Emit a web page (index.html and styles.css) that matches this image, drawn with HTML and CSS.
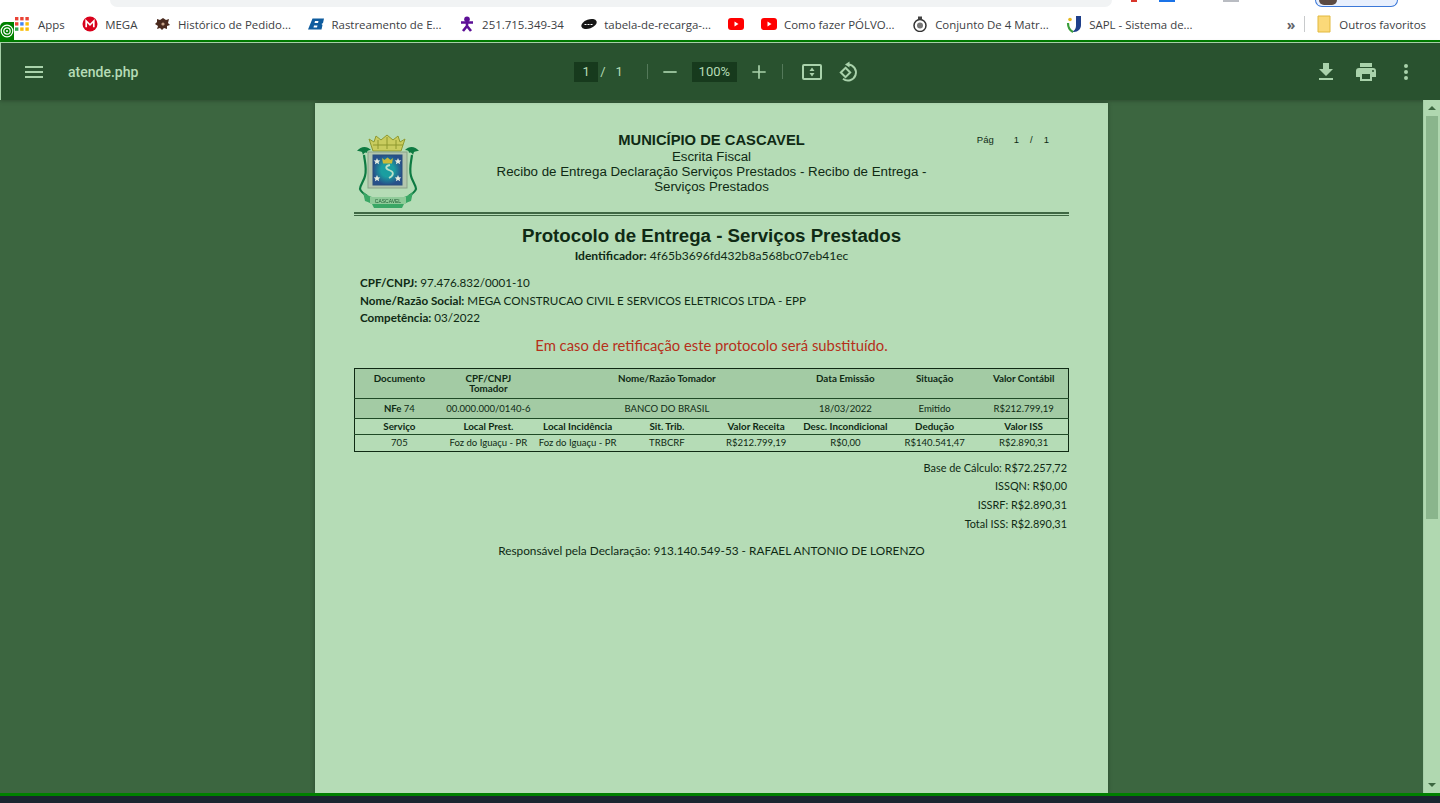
FILE: index.html
```html
<!DOCTYPE html>
<html lang="pt-BR">
<head>
    <meta charset="UTF-8">
    <meta name="viewport" content="width=device-width, initial-scale=1.0">
    <title>atende.php</title>
    <link rel="stylesheet" href="styles.css">
</head>
<body>
    <div class="topstrip">
        <div class="omnibox"></div>
        <span class="ext ext-red"></span>
        <span class="ext ext-blue"></span>
        <span class="ext ext-gray"></span>
        <div class="profile-pill"><span class="avatar"></span></div>
    </div>

    <div class="bookmarks">
        <div class="bm-list">
            <a class="bm bm-apps">
                <svg width="16" height="16" viewBox="0 0 16 16"><g>
                    <rect x="1" y="1" width="3.4" height="3.4" fill="#ea4335"/><rect x="6.2" y="1" width="3.4" height="3.4" fill="#ea4335"/><rect x="11.4" y="1" width="3.4" height="3.4" fill="#ea4335"/>
                    <rect x="1" y="6.2" width="3.4" height="3.4" fill="#ea4335"/><rect x="6.2" y="6.2" width="3.4" height="3.4" fill="#4285f4"/><rect x="11.4" y="6.2" width="3.4" height="3.4" fill="#fbbc05"/>
                    <rect x="1" y="11.4" width="3.4" height="3.4" fill="#34a853"/><rect x="6.2" y="11.4" width="3.4" height="3.4" fill="#fbbc05"/><rect x="11.4" y="11.4" width="3.4" height="3.4" fill="#fbbc05"/>
                </g></svg>
                <span>Apps</span>
            </a>
            <a class="bm">
                <svg width="16" height="16" viewBox="0 0 16 16"><circle cx="8" cy="8" r="7.5" fill="#d9001b"/><path d="M4.2 11.2V5l3.8 3.8L11.8 5v6.2" fill="none" stroke="#fff" stroke-width="1.7"/></svg>
                <span>MEGA</span>
            </a>
            <a class="bm">
                <svg width="16" height="16" viewBox="0 0 16 16"><path d="M2 3l3 1 3-2 3 2 3-1-1 4 2 2-3 1 0 3-3-1-2 2-2-2-3 1 1-3-3-2 2-2z" fill="#4a2a1e"/><circle cx="8" cy="8" r="1.6" fill="#c9a58a"/></svg>
                <span>Histórico de Pedido...</span>
            </a>
            <a class="bm">
                <svg width="16" height="16" viewBox="0 0 16 16"><path d="M4.500 2.500H16l-1 4.500-1.500 1 1 1-1 4.500H0zM7 5l-.5 2h3.500l.5-2zM6 9.500l-.5 2H9l.5-2z" fill="#0f5c9e" fill-rule="evenodd"/></svg>
                <span>Rastreamento de E...</span>
            </a>
            <a class="bm">
                <svg width="16" height="16" viewBox="0 0 16 16"><circle cx="8" cy="3.200" r="2.800" fill="#5c0f96"/><path d="M2 6.500h12M8 6v4M8 10l-4 5M8 10l4 5" fill="none" stroke="#5c0f96" stroke-width="2.600"/></svg>
                <span>251.715.349-34</span>
            </a>
            <a class="bm">
                <svg width="16" height="16" viewBox="0 0 16 16"><ellipse cx="8" cy="8" rx="8" ry="4.500" transform="rotate(-20 8 8)" fill="#161616"/><path d="M3.500 8.500h9" stroke="#fff" stroke-width="1.200" stroke-dasharray="2 1"/></svg>
                <span>tabela-de-recarga-...</span>
            </a>
            <a class="bm">
                <svg width="16" height="16" viewBox="0 0 16 16"><rect y="2" width="16" height="12" rx="3" fill="#f00"/><path d="M6.500 5.500l4 2.500-4 2.500z" fill="#fff"/></svg>
            </a>
            <a class="bm bm-polvo">
                <svg width="16" height="16" viewBox="0 0 16 16"><rect y="2" width="16" height="12" rx="3" fill="#f00"/><path d="M6.500 5.500l4 2.500-4 2.500z" fill="#fff"/></svg>
                <span>Como fazer PÓLVO...</span>
            </a>
            <a class="bm">
                <svg width="16" height="16" viewBox="0 0 16 16"><circle cx="8" cy="9.500" r="6" fill="#fff" stroke="#333" stroke-width="1.500"/><circle cx="8" cy="9.500" r="3" fill="#777"/><rect x="6" y="0.500" width="4" height="3" fill="#444"/></svg>
                <span>Conjunto De 4 Matr...</span>
            </a>
            <a class="bm">
                <svg width="16" height="18" viewBox="0 0 16 18"><path d="M10 1h5v9c0 4-3 7-7 7H6c2-1 4-3 4-6z" fill="#1e3f8a"/><path d="M2 8c0 4 1 7 5 9" fill="none" stroke="#3a9d3a" stroke-width="2.200"/><circle cx="4" cy="4.500" r="1.800" fill="#e6b820"/></svg>
                <span>SAPL - Sistema de...</span>
            </a>
        </div>
        <div class="bm-end">
            <span class="chevrons">»</span>
            <span class="bm-sep"></span>
            <a class="bm bm-other">
                <svg width="16" height="18" viewBox="0 0 16 18"><path d="M2 1h7l5 0v16H2z" fill="#fbd979" stroke="#e2b93f" stroke-width="1"/></svg>
                <span>Outros favoritos</span>
            </a>
        </div>
    </div>

    <div class="badge">
        <svg width="14" height="14" viewBox="0 0 14 14"><circle cx="7" cy="7" r="5.800" fill="none" stroke="#fff" stroke-width="1.200"/><circle cx="7" cy="7" r="3.200" fill="none" stroke="#fff" stroke-width="1.200"/><circle cx="7" cy="7" r="1" fill="#fff"/></svg>
    </div>

    <div class="viewer">
        <header class="toolbar">
            <div class="tb-left">
                <svg class="tb-icon" width="24" height="24" viewBox="0 0 24 24"><path d="M3 18h18v-2H3zm0-5h18v-2H3zm0-7v2h18V6z"/></svg>
                <span class="filename">atende.php</span>
            </div>
            <div class="tb-center">
                <span class="field field-page">1</span>
                <span class="pg-of">/</span>
                <span class="pg-total">1</span>
                <span class="tb-sep tb-sep-first"></span>
                <svg class="tb-icon" width="20" height="20" viewBox="0 0 24 24"><path d="M4 11h16v2H4z"/></svg>
                <span class="field field-zoom">100%</span>
                <svg class="tb-icon" width="20" height="20" viewBox="0 0 24 24"><path d="M20 13h-7v7h-2v-7H4v-2h7V4h2v7h7z"/></svg>
                <span class="tb-sep tb-sep-second"></span>
                <svg class="tb-icon" width="20" height="16" viewBox="0 0 20 16"><path d="M2 0h16a2 2 0 0 1 2 2v12a2 2 0 0 1-2 2H2a2 2 0 0 1-2-2V2a2 2 0 0 1 2-2zm0 2v12h16V2zM10 3.500 12.500 7h-5zM10 12.500 7.500 9h5z" fill-rule="evenodd"/></svg>
                <svg class="tb-line tb-rotate" width="24" height="24" viewBox="0 0 24 24"><path d="M9.500 7.800 14.200 12.500 9.500 17.200 4.800 12.500z"/><path d="M12 4.500a8 8 0 1 1-5 14.300"/><path class="tb-arrow" d="M13.500 1.500 9 4.500l4.500 3z"/></svg>
            </div>
            <div class="tb-right">
                <svg class="tb-icon" width="24" height="24" viewBox="0 0 24 24"><path d="M19 9h-4V3H9v6H5l7 7zM5 18v2h14v-2z"/></svg>
                <svg class="tb-icon" width="24" height="24" viewBox="0 0 24 24"><path d="M19 8H5a3 3 0 0 0-3 3v6h4v4h12v-4h4v-6a3 3 0 0 0-3-3zm-3 11H8v-5h8zm3-7a1 1 0 1 1 0-2 1 1 0 0 1 0 2zM18 3H6v4h12z"/></svg>
                <svg class="tb-icon" width="24" height="24" viewBox="0 0 24 24"><path d="M12 8a2 2 0 1 0 0-4 2 2 0 0 0 0 4zm0 2a2 2 0 1 0 0 4 2 2 0 0 0 0-4zm0 6a2 2 0 1 0 0 4 2 2 0 0 0 0-4z"/></svg>
            </div>
        </header>

        <div class="viewer-body">
            <main class="stage">
                <article class="page">
                    <div class="doc-head">
                        <svg class="crest" width="64" height="76" viewBox="0 0 64 76">
                            <defs>
                                <radialGradient id="brasao">
                                    <stop offset="0.450" stop-color="#1a9ea0"/>
                                    <stop offset="1" stop-color="#27508a"/>
                                </radialGradient>
                            </defs>
                            <!-- coroa -->
                            <path d="M13 5l5 3 2-6 5 4 6-5 6 5 5-4 2 6 5-3-4 12H17z" fill="#c9cc5e" stroke="#8e982f" stroke-width="1"/>
                            <path d="M17 11h30M22 6v9M31 3v12M40 6v9" stroke="#8e982f" stroke-width="1"/>
                            <!-- golfinhos e ramos -->
                            <path d="M1 17c4-5 10-5 14-1-3 0-4 1-4 3-2-1-3 0-4 2l-1-3c-2-1-3-1-5-1z" fill="#0e7a42"/>
                            <path d="M63 17c-4-5-10-5-14-1 3 0 4 1 4 3 2-1 3 0 4 2l1-3c2-1 3-1 5-1z" fill="#0e7a42"/>
                            <path d="M8 21c1 8 3 14 1 21-1 5-5 9-5 13 1 3 4 5 7 7" fill="none" stroke="#0e7a42" stroke-width="2.200"/>
                            <path d="M56 21c-1 8-3 14-1 21 1 5 5 9 5 13-1 3-4 5-7 7" fill="none" stroke="#0e7a42" stroke-width="2.200"/>
                            <!-- escudo -->
                            <rect x="12" y="18" width="39" height="36" fill="#b3c6ae" stroke="#8aa288"/>
                            <rect x="17" y="21" width="29" height="30" fill="url(#brasao)" stroke="#2b4f7d" stroke-width="1"/>
                            <path d="M26 24l2.500 2 3-2.500 3 2.500 2.500-2-1 5.500H27z" fill="#c9bb3a"/>
                            <path d="M34 31c-5 1-5 4 0 5.500 4 1.500 4 5-1 7.500" fill="none" stroke="#b9e0c8" stroke-width="1.800"/>
                            <g fill="#e4ecdf">
                                <path d="M21 24l1 2.200 2.300.3-1.700 1.500.5 2.200-2.100-1.200-2.100 1.200.5-2.200-1.700-1.500 2.300-.3z"/>
                                <path d="M42 24l1 2.200 2.300.3-1.700 1.500.5 2.200-2.100-1.200-2.100 1.200.5-2.200-1.700-1.500 2.300-.3z"/>
                                <path d="M21 41l1 2.200 2.300.3-1.700 1.500.5 2.200-2.100-1.200-2.100 1.200.5-2.200-1.700-1.500 2.300-.3z"/>
                                <path d="M42 41l1 2.200 2.300.3-1.700 1.500.5 2.200-2.100-1.200-2.100 1.200.5-2.200-1.700-1.500 2.300-.3z"/>
                            </g>
                            <!-- faixa -->
                            <path d="M7 58c4 3 6 4 9 5h32c3-1 5-2 9-5l-2 9c-3 1-5 2-7 3l-2 4H18l-2-4c-2-1-4-2-7-3z" fill="#3aa765"/>
                            <rect x="14" y="63" width="36" height="7" fill="#8fcb99"/>
                            <text class="crest-label" x="32" y="68.500" text-anchor="middle">CASCAVEL</text>
                        </svg>
                        <div class="doc-title">
                            <strong class="municipio">MUNICÍPIO DE CASCAVEL</strong>
                            <span>Escrita Fiscal</span>
                            <span>Recibo de Entrega Declaração Serviços Prestados - Recibo de Entrega -<br>Serviços Prestados</span>
                        </div>
                        <div class="pag"><span>Pág</span><span>1</span><span>/</span><span>1</span></div>
                    </div>
                    <div class="double-rule"></div>

                    <h1 class="protocolo">Protocolo de Entrega - Serviços Prestados</h1>
                    <p class="identificador"><b>Identificador:</b> 4f65b3696fd432b8a568bc07eb41ec</p>

                    <div class="dados">
                        <p><b>CPF/CNPJ:</b> 97.476.832/0001-10</p>
                        <p><b>Nome/Razão Social:</b> MEGA CONSTRUCAO CIVIL E SERVICOS ELETRICOS LTDA - EPP</p>
                        <p><b>Competência:</b> 03/2022</p>
                    </div>

                    <p class="aviso">Em caso de retificação este protocolo será substituído.</p>

                    <table class="grade">
                        <tr class="row-head">
                            <th>Documento</th>
                            <th>CPF/CNPJ<br>Tomador</th>
                            <th colspan="3">Nome/Razão Tomador</th>
                            <th>Data Emissão</th>
                            <th>Situação</th>
                            <th>Valor Contábil</th>
                        </tr>
                        <tr class="row-data">
                            <td><b>NFe</b> 74</td>
                            <td>00.000.000/0140-6</td>
                            <td colspan="3">BANCO DO BRASIL</td>
                            <td>18/03/2022</td>
                            <td>Emitido</td>
                            <td>R$212.799,19</td>
                        </tr>
                        <tr class="row-sub">
                            <th>Serviço</th>
                            <th>Local Prest.</th>
                            <th>Local Incidência</th>
                            <th>Sit. Trib.</th>
                            <th>Valor Receita</th>
                            <th>Desc. Incondicional</th>
                            <th>Dedução</th>
                            <th>Valor ISS</th>
                        </tr>
                        <tr class="row-last">
                            <td>705</td>
                            <td>Foz do Iguaçu - PR</td>
                            <td>Foz do Iguaçu - PR</td>
                            <td>TRBCRF</td>
                            <td>R$212.799,19</td>
                            <td>R$0,00</td>
                            <td>R$140.541,47</td>
                            <td>R$2.890,31</td>
                        </tr>
                    </table>

                    <div class="totais">
                        <p>Base de Cálculo: R$72.257,72</p>
                        <p>ISSQN: R$0,00</p>
                        <p>ISSRF: R$2.890,31</p>
                        <p>Total ISS: R$2.890,31</p>
                    </div>

                    <p class="responsavel">Responsável pela Declaração: 913.140.549-53 - RAFAEL ANTONIO DE LORENZO</p>
                </article>
            </main>
            <aside class="scrollbar">
                <span class="arrow arrow-up"></span>
                <span class="thumb"></span>
                <span class="arrow arrow-down"></span>
            </aside>
        </div>
    </div>

    <div class="bottom-line"></div>
    <div class="taskbar"></div>
</body>
</html>
```

FILE: styles.css
```css
html, body {
    height: 803px;
    overflow: hidden;
}
body {
    margin: 0;
    display: flex;
    flex-direction: column;
    background-color: #fff;
    font-family: "Open Sans", sans-serif;
    position: relative;
}
p, h1 {
    margin: 0;
}

/* browser strip */
.topstrip {
    height: 14px;
    flex: none;
    display: flex;
    align-items: flex-start;
    background-color: #fff;
}
.omnibox {
    width: 1002px;
    height: 7px;
    margin-left: 110px;
    background-color: #f1f3f4;
    border-radius: 0 0 12px 12px;
}
.ext {
    height: 2px;
}
.ext-red {
    width: 6px;
    margin-left: 19px;
    background-color: #d9362b;
}
.ext-blue {
    width: 16px;
    margin-left: 22px;
    background-color: #1a73e8;
}
.ext-gray {
    width: 16px;
    margin-left: 48px;
    background-color: #b9bcc2;
}
.profile-pill {
    width: 83px;
    height: 7px;
    margin-left: 76px;
    border: 1px solid #3b78d8;
    border-top: none;
    border-radius: 0 0 14px 14px;
    background-color: #e8f0fe;
    box-sizing: border-box;
    padding-left: 3px;
}
.avatar {
    display: block;
    width: 18px;
    height: 5px;
    background-color: #5b4a42;
    border-radius: 0 0 9px 9px;
}

/* bookmarks */
.bookmarks {
    height: 26px;
    flex: none;
    display: flex;
    justify-content: space-between;
    align-items: center;
    padding: 0 14px 6px 14px;
    box-sizing: border-box;
    font-size: 11.450px;
    color: #3c4043;
}
.bm-list {
    display: flex;
    align-items: center;
    gap: 17.500px;
}
.bm {
    display: flex;
    align-items: center;
    gap: 7px;
    white-space: nowrap;
}
.bm-apps {
    gap: 8px;
}
.bm-polvo {
    margin-left: -1px;
}
.bm-end {
    display: flex;
    align-items: center;
}
.chevrons {
    font-size: 14px;
    color: #5f6368;
    font-weight: 700;
}
.bm-sep {
    width: 1px;
    height: 16px;
    margin: 0 11px 0 9px;
    background-color: #c8cacc;
}

.badge {
    position: absolute;
    left: 0;
    top: 22px;
    width: 14px;
    height: 18px;
    display: flex;
    align-items: center;
    justify-content: center;
    background-color: #008000;
    border-radius: 5px 0 0 0;
}

/* viewer */
.viewer {
    flex: 1;
    min-height: 0;
    display: flex;
    flex-direction: column;
    border-top: 2px solid #008000;
}
.toolbar {
    height: 57px;
    flex: none;
    display: grid;
    grid-template-columns: 1fr auto 1fr;
    align-items: center;
    padding: 0 22px;
    background-color: #29522f;
    border-top: 1px solid #a5cfa7;
    border-left: 1px solid #a5cfa7;
    box-shadow: 0 1px 4px rgba(0, 0, 0, 0.25);
    position: relative;
    color: #b5dcb6;
    font-family: Roboto, sans-serif;
    font-size: 13px;
}
.tb-icon {
    fill: #a9d2ab;
    flex: none;
    display: block;
}
.tb-line {
    fill: none;
    stroke: #a9d2ab;
    stroke-width: 2;
    flex: none;
    display: block;
}
.tb-arrow {
    fill: #a9d2ab;
    stroke: none;
}
.tb-left {
    display: flex;
    align-items: center;
    margin-left: -1px;
}
.filename {
    margin-left: 22px;
    font-size: 14px;
    font-weight: 500;
}
.tb-center {
    display: flex;
    align-items: center;
    margin-left: -7px;
}
.field {
    display: flex;
    align-items: center;
    justify-content: center;
    height: 20px;
    background-color: #173a1d;
}
.field-page { width: 24px; }
.pg-of { margin-left: 2px; }
.pg-total { margin-left: 10px; }
.tb-sep {
    width: 1px;
    height: 15px;
    background-color: #54795a;
}
.tb-sep-first {
    margin: 0 12px 0 24px;
}
.tb-sep-second {
    margin: 0 19px 0 13px;
}
.field-zoom {
    width: 45px;
    margin: 0 12px 0 12px;
}
.tb-rotate {
    margin-left: 14px;
}
.tb-right {
    display: flex;
    justify-content: flex-end;
    gap: 16px;
}

.viewer-body {
    flex: 1;
    min-height: 0;
    display: flex;
    background-color: #3c6640;
}
.stage {
    flex: 1;
    display: flex;
    justify-content: center;
    padding-top: 3px;
    overflow: hidden;
}

/* pdf page */
.page {
    width: 793px;
    margin-right: 1px;
    box-sizing: border-box;
    padding: 27px 39px 0 39px;
    background-color: #b5dcb6;
    box-shadow: 0 0 4px rgba(0, 0, 0, 0.3);
    color: #0f2a14;
    font-family: Lato, sans-serif;
}
.doc-head {
    display: flex;
    height: 82px;
    position: relative;
}
.crest {
    margin: 4px 0 0 2px;
    filter: blur(0.4px);
}
.crest-label {
    font-family: "Liberation Sans", sans-serif;
    font-size: 5px;
    fill: #1f5a33;
}
.doc-title {
    position: absolute;
    left: 135px;
    width: 445px;
    top: 2px;
    display: flex;
    flex-direction: column;
    align-items: center;
    text-align: center;
    font-family: "Liberation Sans", sans-serif;
    font-size: 13.320px;
    line-height: 15px;
}
.municipio {
    font-size: 14.750px;
    line-height: 17px;
}
.pag {
    position: absolute;
    right: 20px;
    top: 4px;
    display: flex;
    gap: 11px;
    font-family: "Liberation Sans", sans-serif;
    font-size: 9.500px;
}
.pag span:first-child {
    margin-right: 9px;
}
.double-rule {
    height: 1px;
    border-top: 2px solid #3f6844;
    border-bottom: 1px solid #3f6844;
}
.protocolo {
    margin-top: 9px;
    text-align: center;
    font-family: "Liberation Sans", sans-serif;
    font-size: 18.700px;
    line-height: 21px;
    font-weight: 700;
}
.identificador {
    margin-top: 2px;
    text-align: center;
    font-size: 12.100px;
    line-height: 16px;
}
.dados {
    margin: 10px 0 0 6px;
    font-size: 11.650px;
    line-height: 17.500px;
}
.aviso {
    margin-top: 8px;
    text-align: center;
    font-size: 14.800px;
    line-height: 20px;
    color: #b5301a;
}
.grade {
    width: 715px;
    margin-top: 13px;
    table-layout: fixed;
    border-collapse: collapse;
    border: 1px solid #0f2a14;
    font-size: 9.550px;
    text-align: center;
}
.grade th, .grade td {
    padding: 0;
    line-height: 10px;
}
.grade th {
    font-size: 9.800px;
}
.row-head th {
    height: 30px;
    vertical-align: top;
    padding-top: 4px;
    box-sizing: border-box;
    background-color: #a3cba4;
    border-bottom: 1px solid #1f4a26;
}
.grade .row-data td {
    height: 18px;
    padding-top: 1px;
    background-color: #a3cba4;
    border-bottom: 1px solid #1f4a26;
}
.row-sub th {
    height: 15px;
    border-bottom: 1px solid #1f4a26;
}
.row-last td {
    height: 16px;
}
.totais {
    margin: 7px 2px 0 0;
    text-align: right;
    font-size: 10.900px;
    line-height: 18.700px;
}
.responsavel {
    margin-top: 10px;
    text-align: center;
    font-size: 11.800px;
    line-height: 16px;
}

/* scrollbar */
.scrollbar {
    width: 16px;
    flex: none;
    position: relative;
    background-color: #b0d8b0;
    box-shadow: -1px 0 0 #a5cfa7;
}
.thumb {
    position: absolute;
    left: 2px;
    right: 2px;
    top: 16px;
    height: 403px;
    background-color: #8ab58c;
}
.arrow {
    position: absolute;
    left: 4px;
    width: 0;
    height: 0;
    border-left: 4px solid transparent;
    border-right: 4px solid transparent;
}
.arrow-up {
    top: 6px;
    border-bottom: 4px solid #3c6640;
}
.arrow-down {
    bottom: 6px;
    border-top: 4px solid #3c6640;
}

.bottom-line {
    height: 3px;
    flex: none;
    background-color: #008000;
}
.taskbar {
    height: 7px;
    flex: none;
    background-color: #1a2530;
}
```
